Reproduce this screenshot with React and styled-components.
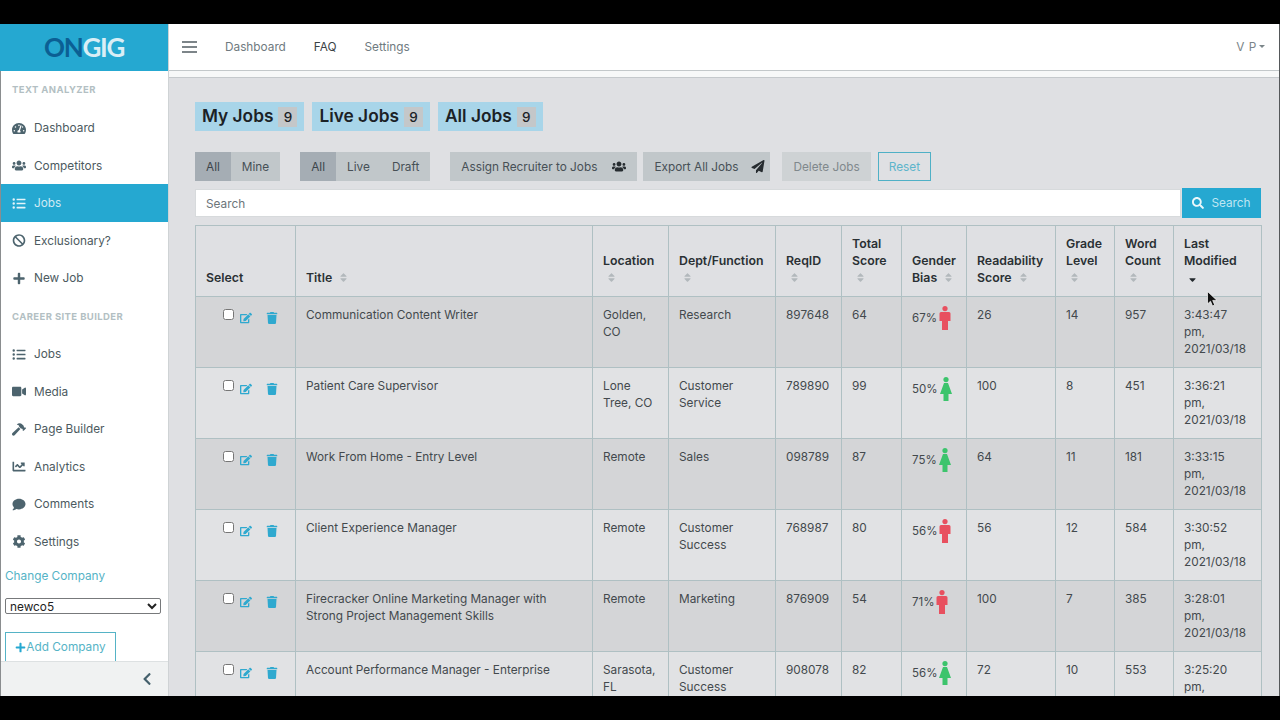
import React from 'react';
import styled, { createGlobalStyle } from 'styled-components';
import {
  FaTachometerAlt, FaUsers, FaListUl, FaBan, FaPlus, FaVideo, FaHammer, FaChartLine,
  FaComment, FaCog, FaPaperPlane, FaSearch, FaEdit, FaTrash, FaChevronLeft, FaSort, FaSortDown,
} from 'react-icons/fa';

const GlobalStyle = createGlobalStyle`
  html, body { margin: 0; background: #000; }
  body { font-family: Inter, 'Liberation Sans', sans-serif; font-size: 11.8px; color: #41474b; }
  * { box-sizing: border-box; }
`;

const Frame = styled.div`
  position: relative;
  margin-top: 24px;
  width: 1280px;
  height: 672px;
  display: flex;
  overflow: hidden;
  background: #dfe0e3;
  border-right: 1px solid #55585a;
`;

const Sidebar = styled.aside`
  width: 169px;
  flex: none;
  display: flex;
  flex-direction: column;
  background: #fff;
  border-left: 1px solid #8a8d8f;
  border-right: 1px solid #cfd3d5;
`;

const Logo = styled.div`
  height: 47px;
  flex: none;
  margin-left: -1px;
  padding-bottom: 2px;
  background: #25a8d1;
  display: flex;
  align-items: center;
  justify-content: center;
  font-family: Lato, sans-serif;
  font-size: 26px;
  font-weight: 700;
  letter-spacing: -1.3px;
  color: #d9eef6;
  span { color: #0b5f94; }
`;

const SideScroll = styled.div`
  flex: 1;
  overflow: hidden;
`;

const SectionLabel = styled.div`
  height: ${p => p.$h}px;
  padding: ${p => p.$top}px 0 0 11px;
  font-size: 9.5px;
  line-height: 12px;
  font-weight: 700;
  letter-spacing: 0.4px;
  color: #b3bfc3;
`;

const NavItem = styled.div`
  height: 37.5px;
  display: flex;
  align-items: center;
  margin-left: -1px;
  padding-left: 12px;
  gap: 8px;
  color: ${p => (p.$active ? '#cfeaf4' : '#4c5a60')};
  background: ${p => (p.$active ? '#25a8d1' : 'transparent')};
  svg { width: 14px; height: 13px; flex: none; color: ${p => (p.$active ? '#e4f4fa' : '#4d646e')}; }
`;

const ChangeCompany = styled.div`
  margin: 8px 0 0 4px;
  line-height: 16px;
  color: #55b3c6;
`;

const CompanySelect = styled.select`
  display: block;
  margin: 14px 0 0 4px;
  width: 156px;
  height: 16px;
  padding: 0;
  font-family: Inter, sans-serif;
  font-size: 11.8px;
  color: #222;
  background: #fff;
  border: 1px solid #77797b;
  border-radius: 2px;
`;

const AddCompany = styled.div`
  margin: 18px 0 0 4px;
  width: 111px;
  height: 30px;
  display: flex;
  align-items: center;
  justify-content: center;
  border: 1px solid #55b3c6;
  color: #55b3c6;
  svg { width: 11px; height: 11px; color: #25a8d1; }
`;

const SideFooter = styled.div`
  height: 35px;
  flex: none;
  background: #f0f2f2;
  border-top: 1px solid #dde1e2;
  display: flex;
  align-items: center;
  justify-content: flex-end;
  padding-right: 16px;
  svg { width: 10px; height: 14px; color: #44606c; }
`;

const Content = styled.div`
  flex: 1;
  min-width: 0;
  display: flex;
  flex-direction: column;
`;

const TopBar = styled.header`
  height: 47px;
  flex: none;
  padding: 0 14px 1px 13px;
  background: #fff;
  border-bottom: 1px solid #c3c8ca;
  display: flex;
  align-items: center;
`;

const TopStrip = styled.div`
  height: 7px;
  flex: none;
  background: #f7f8f8;
  border-bottom: 1px solid #c5c9cc;
`;

const Burger = styled.div`
  width: 15px;
  height: 12px;
  margin-right: 28px;
  border-top: 2px solid #7d8589;
  border-bottom: 2px solid #7d8589;
  position: relative;
  &::after {
    content: '';
    position: absolute;
    left: 0;
    right: 0;
    top: 3px;
    height: 2px;
    background: #7d8589;
  }
`;

const TopLink = styled.div`
  margin-right: 28px;
  color: ${p => (p.$current ? '#3b4246' : '#6f7a80')};
`;

const UserMenu = styled.div`
  margin-left: auto;
  display: flex;
  align-items: center;
  gap: 2px;
  color: #7b8589;
  letter-spacing: 0.6px;
  &::after {
    content: '';
    border-left: 3.500px solid transparent;
    border-right: 3.500px solid transparent;
    border-top: 3.500px solid #7b8589;
  }
`;

const Main = styled.main`
  flex: 1;
  min-height: 0;
  overflow: hidden;
  padding: 24px 18px 0 26px;
`;

const Tabs = styled.div`
  display: flex;
  gap: 8px;
`;

const Tab = styled.div`
  height: 29px;
  display: flex;
  align-items: center;
  padding: 0 7px 2px;
  gap: 5px;
  background: #a8d5e9;
  color: #1b2226;
  font-size: 17.300px;
  font-weight: 600;
`;

const Count = styled.span`
  width: 19px;
  height: 20px;
  margin-top: 3px;
  display: flex;
  align-items: center;
  justify-content: center;
  background: #c4c7c9;
  font-size: 13.500px;
  font-weight: 500;
`;

const Toolbar = styled.div`
  display: flex;
  margin-top: 21px;
`;

const Group = styled.div`
  display: flex;
  margin-right: ${p => p.$gap}px;
`;

const Btn = styled.div`
  height: 29px;
  display: flex;
  align-items: center;
  gap: ${p => p.$iconGap || 0}px;
  padding: 0 ${p => p.$pr || 11}px 0 11px;
  margin-right: ${p => p.$gap || 0}px;
  color: #475056;
  background: #c1c7ca;
  svg { width: 14px; height: 13px; color: #262c30; }
  ${p => p.$on && 'background: #a5adb4; color: #3d454b;'}
  ${p => p.$off && 'background: #ced2d4; color: #80888c;'}
  ${p => p.$ghost && 'background: transparent; border: 1px solid #4fb0c6; color: #5db5cb; padding: 0 10px;'}
`;

const SearchRow = styled.div`
  display: flex;
  align-items: center;
  margin-top: 7px;
  height: 30px;
`;

const SearchInput = styled.div`
  flex: 1;
  height: 28px;
  padding: 1px 0 0 10px;
  display: flex;
  align-items: center;
  background: #fff;
  border: 1px solid #d7dadc;
  color: #6c757a;
`;

const SearchBtn = styled.div`
  width: 79px;
  height: 30px;
  margin-left: 1px;
  display: flex;
  align-items: center;
  justify-content: center;
  gap: 7px;
  background: #25a8d1;
  color: #bfe6f3;
  svg { width: 12px; height: 12px; color: #eaf7fb; }
`;

const Table = styled.table`
  width: 1066px;
  margin-top: 7px;
  table-layout: fixed;
  border-collapse: collapse;
  border: 1px solid #afc0c3;
`;

const Th = styled.th`
  padding: 9px 10px 10px;
  height: 70px;
  vertical-align: bottom;
  text-align: left;
  line-height: 17px;
  font-size: 12.300px;
  font-weight: 600;
  color: #2a3034;
  border: 1px solid #afc0c3;
  svg { width: 9px; height: 11px; margin-left: 4px; vertical-align: -1px; color: #b2b8bc; }
  svg.sorted { color: #23292d; }
`;

const Row = styled.tr`
  background: ${p => (p.$odd ? '#d4d5d7' : '#e1e2e4')};
`;

const Td = styled.td`
  height: 71px;
  padding: 10px 10px 8px;
  vertical-align: top;
  line-height: 17px;
  color: #43494d;
  border: 1px solid #afc0c3;
`;

const Actions = styled.div`
  display: flex;
  align-items: flex-start;
  padding-left: 17px;
  svg { width: 12px; height: 12px; margin-top: 5px; color: #2fa9cf; }
  svg + svg { margin-left: 14px; }
`;

const Check = styled.input`
  width: 11px;
  height: 11px;
  margin: 2px 6px 0 0;
`;

const Bias = styled.div`
  display: flex;
  align-items: center;
  gap: 2px;
  height: 24px;
  margin-top: -1px;
  font-size: 11.500px;
`;

const Cursor = styled.svg`
  position: absolute;
  left: 1207px;
  top: 267px;
  width: 11px;
  height: 16px;
`;

const columns = [
  ['Select', 100, false], ['Title', 297, true], ['Location', 76, true], ['Dept/Function', 107, true],
  ['ReqID', 66, true], ['Total Score', 60, true], ['Gender Bias', 65, true], ['Readability Score', 89, true],
  ['Grade Level', 59, true], ['Word Count', 59, true], ['Last Modified', 88, 'down'],
];

const jobs = [
  ['Communication Content Writer', 'Golden, CO', 'Research', '897648', 64, 67, 'm', 26, 14, 957, '3:43:47'],
  ['Patient Care Supervisor', 'Lone Tree, CO', 'Customer Service', '789890', 99, 50, 'f', 100, 8, 451, '3:36:21'],
  ['Work From Home - Entry Level', 'Remote', 'Sales', '098789', 87, 75, 'f', 64, 11, 181, '3:33:15'],
  ['Client Experience Manager', 'Remote', 'Customer Success', '768987', 80, 56, 'm', 56, 12, 584, '3:30:52'],
  ['Firecracker Online Marketing Manager with Strong Project Management Skills', 'Remote', 'Marketing', '876909', 54, 71, 'm', 100, 7, 385, '3:28:01'],
  ['Account Performance Manager - Enterprise', 'Sarasota, FL', 'Customer Success', '908078', 82, 56, 'f', 72, 10, 553, '3:25:20'],
];

const PersonIcon = ({ kind }) => (
  <svg width="12" height="24" viewBox="0 0 12 24">
    {kind === 'm' ? (
      <g fill="#e8505f">
        <circle cx="6" cy="2.6" r="2.6" />
        <path d="M2 6h8a1.5 1.5 0 0 1 1.5 1.5V15H9v9H3v-9H.5V7.500A1.5 1.5 0 0 1 2 6z" />
      </g>
    ) : (
      <g fill="#3cc46c">
        <circle cx="6" cy="2.600" r="2.600" />
        <path d="M4 6h4l4 11H8.500v7h-5v-7H0z" />
      </g>
    )}
  </svg>
);

const navTop = [
  [FaTachometerAlt, 'Dashboard'], [FaUsers, 'Competitors'], [FaListUl, 'Jobs', true],
  [FaBan, 'Exclusionary?'], [FaPlus, 'New Job'],
];

const navSite = [
  [FaListUl, 'Jobs'], [FaVideo, 'Media'], [FaHammer, 'Page Builder'],
  [FaChartLine, 'Analytics'], [FaComment, 'Comments'], [FaCog, 'Settings'],
];

const renderNav = ([Icon, label, active]) => (
  <NavItem key={label} $active={active}><Icon />{label}</NavItem>
);

export default function App() {
  return (
    <>
      <GlobalStyle />
      <Frame>
        <Sidebar>
          <Logo><span>ON</span>GIG</Logo>
          <SideScroll>
            <SectionLabel $h={38.3} $top={13}>TEXT ANALYZER</SectionLabel>
            {navTop.map(renderNav)}
            <SectionLabel $h={38.7} $top={14}>CAREER SITE BUILDER</SectionLabel>
            {navSite.map(renderNav)}
            <ChangeCompany>Change Company</ChangeCompany>
            <CompanySelect defaultValue="newco5">
              <option>newco5</option>
            </CompanySelect>
            <AddCompany><FaPlus />Add Company</AddCompany>
          </SideScroll>
          <SideFooter><FaChevronLeft /></SideFooter>
        </Sidebar>
        <Content>
          <TopBar>
            <Burger />
            <TopLink>Dashboard</TopLink>
            <TopLink $current>FAQ</TopLink>
            <TopLink>Settings</TopLink>
            <UserMenu>V P</UserMenu>
          </TopBar>
          <TopStrip />
          <Main>
            <Tabs>
              <Tab>My Jobs <Count>9</Count></Tab>
              <Tab>Live Jobs <Count>9</Count></Tab>
              <Tab>All Jobs <Count>9</Count></Tab>
            </Tabs>
            <Toolbar>
              <Group $gap={20}>
                <Btn $on>All</Btn>
                <Btn>Mine</Btn>
              </Group>
              <Group $gap={20}>
                <Btn $on>All</Btn>
                <Btn>Live</Btn>
                <Btn>Draft</Btn>
              </Group>
              <Btn $gap={6} $iconGap={15}>Assign Recruiter to Jobs <FaUsers /></Btn>
              <Btn $gap={12} $iconGap={13} $pr={5}>Export All Jobs <FaPaperPlane /></Btn>
              <Btn $gap={7} $off>Delete Jobs</Btn>
              <Btn $ghost>Reset</Btn>
            </Toolbar>
            <SearchRow>
              <SearchInput>Search</SearchInput>
              <SearchBtn><FaSearch />Search</SearchBtn>
            </SearchRow>
            <Table>
              <colgroup>
                {columns.map(([name, width]) => <col key={name} style={{ width }} />)}
              </colgroup>
              <thead>
                <tr>
                  {columns.map(([name, , sort]) => (
                    <Th key={name}>
                      {name}
                      {sort === true && <> <FaSort /></>}
                      {sort === 'down' && <> <FaSortDown className="sorted" /></>}
                    </Th>
                  ))}
                </tr>
              </thead>
              <tbody>
                {jobs.map((job, i) => (
                  <Row key={job[3]} $odd={i % 2 === 0}>
                    <Td>
                      <Actions>
                        <Check type="checkbox" />
                        <FaEdit />
                        <FaTrash />
                      </Actions>
                    </Td>
                    <Td>{job[0]}</Td>
                    <Td>{job[1]}</Td>
                    <Td>{job[2]}</Td>
                    <Td>{job[3]}</Td>
                    <Td>{job[4]}</Td>
                    <Td>
                      <Bias>{job[5]}%<PersonIcon kind={job[6]} /></Bias>
                    </Td>
                    <Td>{job[7]}</Td>
                    <Td>{job[8]}</Td>
                    <Td>{job[9]}</Td>
                    <Td>{job[10]}<br />pm,<br />2021/03/18</Td>
                  </Row>
                ))}
              </tbody>
            </Table>
          </Main>
        </Content>
        <Cursor viewBox="0 0 11 16">
          <path d="M0.500 0.500v12.500l3-2.800 2 4.800 2.200-1-2-4.600h4.300z" fill="#111" stroke="#fff" strokeWidth="0.700" />
        </Cursor>
      </Frame>
    </>
  );
}
